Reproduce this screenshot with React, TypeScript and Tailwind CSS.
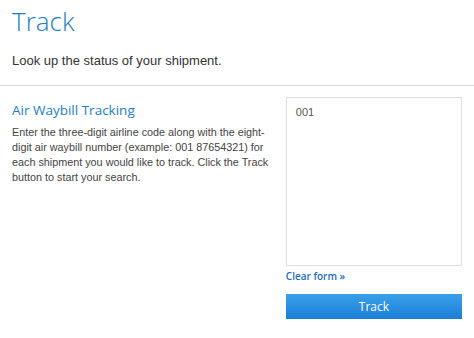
export default function App() {
  return (
    <div className="w-[474px] h-[338px] bg-white overflow-hidden font-['Liberation_Sans',Arial,sans-serif]">
      <div className="px-3 pt-[3px]">
        <h1 className="font-['Open_Sans',sans-serif] font-light text-[26px] leading-[36px] text-[#1e7dc6]">
          Track
        </h1>
        <p className="mt-[13px] text-[13px] leading-[18px] text-[#333]">
          Look up the status of your shipment.
        </p>
      </div>
      <div className="mt-[15px] border-t border-[#dcdcdc]" />
      <div className="flex px-3 pt-[11px]">
        <div className="w-[266px]">
          <h2 className="mt-[4px] font-['Open_Sans',sans-serif] text-[13.5px] leading-[18px] text-[#1e7dc6]">
            Air Waybill Tracking
          </h2>
          <p className="mt-[6px] text-[10.8px] leading-[15px] text-[#444]">
            Enter the three-digit airline code along with the eight-digit air waybill number (example: 001 87654321) for each shipment you would like to track. Click the Track button to start your search.
          </p>
        </div>
        <div className="ml-[9px] w-[177px] flex flex-col">
          <textarea
            defaultValue="001"
            className="h-[169px] w-full resize-none border border-[#dedede] px-[9px] py-[6px] text-[11px] leading-[16px] text-[#555] outline-none font-['Liberation_Sans',Arial,sans-serif]"
          />
          <a className="mt-[3px] font-['Open_Sans',sans-serif] font-semibold text-[10px] leading-[14px] text-[#1a6db5]">
            Clear form »
          </a>
          <button className="mt-[11px] h-[25px] w-full bg-gradient-to-b from-[#3aa0ea] to-[#1a7fd6] font-['Open_Sans',sans-serif] text-[12px] text-white">
            Track
          </button>
        </div>
      </div>
    </div>
  );
}
